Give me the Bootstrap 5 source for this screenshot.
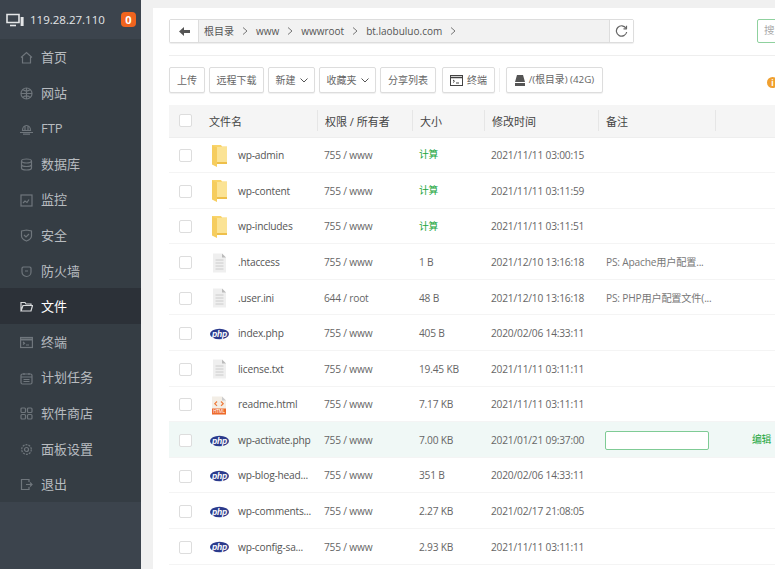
<!DOCTYPE html>
<html lang="zh">
<head>
<meta charset="utf-8">
<title>文件</title>
<link href="https://cdn.jsdelivr.net/npm/bootstrap@5.3.0/dist/css/bootstrap.min.css" rel="stylesheet">
<style>
html,body{height:100%;overflow:hidden}
body{font-family:"Open Sans","Noto Sans CJK SC",sans-serif;background:#f0f0f0;color:#555;font-size:11px}
.shell{width:775px;height:569px;overflow:hidden}
.side{width:141px;flex:none;background:#3c444d;color:#b8bcc0}
.side-top{height:39px;color:#e4e6e8;font-size:11.5px;padding:0 5px 0 6px}
.side-top svg{width:18px;height:14px;margin-right:6px}
.count{background:#f0641e;color:#fff;font-weight:700;font-size:11px;width:15px;height:15px;border-radius:4px;line-height:15px;text-align:center}
.menu{background:#353d44;padding:0;margin:0;list-style:none}
.menu li{height:35.6px;display:flex;align-items:center;padding:2px 0 0 20px;font-size:13px}
.menu li svg{width:13px;height:13px;margin-right:8px;flex:none;fill:none;stroke:#6f767c;stroke-width:1.2}
.menu li.on{background:#2c3138;color:#fff}
.menu li.on svg{stroke:#d8dadc}
.panel{background:#fff;margin:8px 0 0 12px;width:640px;flex:none;padding:11px 0 0 16px}
.pathbar{height:24px;width:465px;border:1px solid #ddd;border-radius:2px;background:#f2f2f2;font-size:10px;box-shadow:0 1px 1px #eee}
.backbtn,.refresh{width:29px;background:#fff;height:100%;flex:none}
.backbtn{border-right:1px solid #ddd}
.refresh{border-left:1px solid #ddd;width:24px;margin-left:auto}
.crumb{padding-left:5px;color:#555;gap:8px}
.searchbox{position:absolute;left:588px;top:0;width:60px;height:24px;border:1px solid #8fd19e;border-radius:2px;color:#aaa;padding:3px 0 0 6px;background:#fff;font-size:10.5px}
.toprow{position:relative}
.rule{height:1px;background:#eee;margin:12px 0 11px;width:606px}
.tools{gap:4px;height:26px;margin-bottom:12px;position:relative}
.tbtn{height:26px;border:1px solid #ddd;border-radius:2px;background:#fff;color:#666;font-size:10px;padding:0;box-shadow:0 1px 1px #f0f0f0;flex:none;display:flex;align-items:center;justify-content:center}
.w1{width:36px}.w2{width:55px}.w3{width:47px}.w4{width:57px}.w5{width:56px}.w6{width:53px;margin-left:2px}.w7{width:97px;font-size:9.8px}
.tsep{width:1px;height:24px;background:#eee;margin-right:2px}
.infodot{position:absolute;left:598px;top:10px;width:11px;height:11px;border-radius:50%;background:#f0a030;color:#fff;font-size:8px;font-weight:700;line-height:11px;text-align:center}
.ftable{table-layout:fixed;width:606px;margin:0;border-collapse:collapse;--bs-table-bg:transparent;color:#666;font-size:10.2px;letter-spacing:-.2px}
.ftable th,.ftable td{padding:0;vertical-align:middle;white-space:nowrap;overflow:hidden;border-bottom:1px solid #f4f4f4;box-shadow:none}
.ftable thead th{background:#f5f5f5;height:32px;font-weight:400;color:#444;font-size:11px;letter-spacing:0;border-bottom:1px solid #eee}
.ftable tbody td{height:35.6px;padding-top:2px}
.hcell{display:block;border-left:1px solid #e6e6e6;height:21px;line-height:24px;padding-left:7px}
.headname{padding-top:3px}
.ftable td.pad{padding-left:7px}
.ftable td.ps{padding-left:8px;color:#777}
.tick{display:block;width:13px;height:13px;flex:none;border:1px solid #ddd;border-radius:2px;background:#fff;margin:0 17px 0 10px}
.namecell{display:flex;align-items:center}
.ficon{width:20px;height:22px;margin-right:9px;flex:none}
.fname{color:#555}
.ftable td.calc{color:#20a53a;font-size:9.8px}
.rowhi td{background:#f0f8f6}
.noteinput{display:block;width:104px;height:19px;border:1px solid #7fcb95;border-radius:2px;background:#fff;margin-left:7px}
.ftable td.editlink{color:#20a53a;font-size:9.8px;padding-left:37px}
</style>
</head>
<body>
<svg width="0" height="0" class="position-absolute">
<defs>
<symbol id="folder" viewBox="0 0 20 22"><path d="M3 0h9l1 1.500h5V19H3z" fill="#f9d46a"/><path d="M8 2h10v15H8z" fill="#fbe395"/><path d="M3 .5l5 2V22l-5-2.500z" fill="#f6cd5e"/><path d="M8 17h10v2H8z" fill="#eebf4a"/></symbol>
<symbol id="doc" viewBox="0 0 20 22"><path d="M4 1.500h9l4 4v15H4z" fill="#efefef"/><path d="M13 1.500l4 4h-4z" fill="#bbb"/><path d="M6.500 8h8M6.500 11h8M6.500 14h8M6.500 17h8" stroke="#ccc"/></symbol>
<symbol id="php" viewBox="0 0 20 22"><ellipse cx="10.500" cy="11" rx="9.500" ry="5.300" fill="#2b3a8c"/><text x="10.500" y="13.800" text-anchor="middle" font-family="Liberation Sans,sans-serif" font-size="8.500" font-style="italic" font-weight="700" fill="#fff">php</text></symbol>
<symbol id="html" viewBox="0 0 20 22"><path d="M3 2.500h10l4 4v14H3z" fill="#f3eee6"/><path d="M13 2.500l4 4h-4z" fill="#ccc"/><path d="M8 7.500L5.800 9.700 8 11.900M12 7.500l2.200 2.200-2.200 2.200" fill="none" stroke="#ee7a3a" stroke-width="1.200"/><rect x="3" y="14.500" width="14" height="6" fill="#ee6a2c"/><text x="10" y="19.400" text-anchor="middle" font-family="Liberation Sans,sans-serif" font-size="4.500" fill="#fff">HTML</text></symbol>
<symbol id="chev" viewBox="0 0 6 8"><path d="M1 .5L5 4 1 7.500" fill="none" stroke="#777"/></symbol>
</defs>
</svg>
<div class="shell d-flex">
<aside class="side d-flex flex-column">
  <div class="side-top d-flex align-items-center">
    <svg viewBox="0 0 18 14"><path d="M1 1.500h12v8H1z" fill="none" stroke="#e4e6e8" stroke-width="1.600"/><path d="M4 12.500h6" stroke="#e4e6e8" stroke-width="1.600"/><rect x="14.600" y="4" width="3" height="9" fill="#e4e6e8"/></svg>
    <span>119.28.27.110</span><span class="count ms-auto">0</span>
  </div>
  <ul class="menu">
    <li><svg viewBox="0 0 13 13"><path d="M1 6.500L6.500 1.500 12 6.500M2.500 6v6h8V6"/></svg>首页</li>
    <li><svg viewBox="0 0 13 13"><circle cx="6.500" cy="6.500" r="5.500"/><path d="M1 6.500h11M6.500 1v11M3 2.800c2 1.400 5 1.400 7 0M3 10.200c2-1.400 5-1.400 7 0"/></svg>网站</li>
    <li><svg viewBox="0 0 13 13"><path d="M2.500 8.500a4 5 0 0 1 8 0zM0 10.500h13M5 3.500v5M8 3.500v5M3 12.200h7"/></svg>FTP</li>
    <li><svg viewBox="0 0 13 13"><ellipse cx="6.500" cy="3" rx="5" ry="2"/><path d="M1.500 3v7c0 1 2 2 5 2s5-1 5-2V3M1.500 6.500c0 1 2 2 5 2s5-1 5-2"/></svg>数据库</li>
    <li><svg viewBox="0 0 13 13"><rect x="1" y="1" width="11" height="11"/><path d="M3 9l2-2 2 1.500 2-3"/></svg>监控</li>
    <li><svg viewBox="0 0 13 13"><path d="M1.500 2l5-1 5 1v5c0 2.500-2.500 4-5 5-2.500-1-5-2.500-5-5z"/><path d="M4 6l2 2 3-3"/></svg>安全</li>
    <li><svg viewBox="0 0 13 13"><path d="M3 2h7l1 1v4a4.500 4.500 0 0 1-9 0V3zM5 6h3"/></svg>防火墙</li>
    <li class="on"><svg viewBox="0 0 13 13"><path d="M1 11V2.500h4l1 1.500h5v1.500M1 11l2-5.500h9.500L11 11z"/></svg>文件</li>
    <li><svg viewBox="0 0 13 13"><rect x="0.600" y="1.500" width="11.800" height="10"/><path d="M.6 3.500h11.800" stroke-width="2"/><path d="M3 6l1.500 1.200L3 8.500M6 9h3"/></svg>终端</li>
    <li><svg viewBox="0 0 13 13"><rect x="1" y="2" width="11" height="10" rx="1.500"/><path d="M1 5h11M4 1v2M9 1v2M3.500 7.500h6M3.500 9.500h6"/></svg>计划任务</li>
    <li><svg viewBox="0 0 13 13"><rect x="1" y="1" width="4.500" height="4.500" rx="1"/><rect x="7.500" y="1" width="4.500" height="4.500" rx="1"/><rect x="1" y="7.500" width="4.500" height="4.500" rx="1"/><rect x="7.500" y="7.500" width="4.500" height="4.500" rx="1"/></svg>软件商店</li>
    <li><svg viewBox="0 0 13 13"><circle cx="6.500" cy="6.500" r="2"/><circle cx="6.500" cy="6.500" r="4.800" stroke-dasharray="2 1"/></svg>面板设置</li>
    <li><svg viewBox="0 0 13 13"><path d="M9 4V1.500H1.500v10H9V9M6 6.500h6M10 4.500l2 2-2 2"/></svg>退出</li>
  </ul>
</aside>
<main class="panel">
  <div class="toprow">
    <div class="pathbar d-flex align-items-center">
      <div class="backbtn d-flex align-items-center justify-content-center"><svg width="11" height="9" viewBox="0 0 11 9"><path d="M0 4.500L5 0v3h6v3H5v3z" fill="#555"/></svg></div>
      <div class="crumb d-flex align-items-center"><span>根目录</span><svg width="6" height="8"><use href="#chev"/></svg><span>www</span><svg width="6" height="8"><use href="#chev"/></svg><span>wwwroot</span><svg width="6" height="8"><use href="#chev"/></svg><span>bt.laobuluo.com</span><svg width="6" height="8"><use href="#chev"/></svg></div>
      <div class="refresh d-flex align-items-center justify-content-center"><svg width="13" height="13" viewBox="0 0 13 13" fill="none" stroke="#666" stroke-width="1.200"><path d="M11 3.200A5.200 5.200 0 1 0 11.700 7"/><path d="M11.500 .8v3h-3" stroke-linejoin="round"/></svg></div>
    </div>
    <div class="searchbox">搜索</div>
  </div>
  <div class="rule"></div>
  <div class="tools d-flex align-items-center">
    <button type="button" class="tbtn w1">上传</button>
    <button type="button" class="tbtn w2">远程下载</button>
    <button type="button" class="tbtn w3">新建<svg class="ms-1" width="8" height="5" viewBox="0 0 8 5" fill="none" stroke="#555"><path d="M.5.5L4 4 7.500.5"/></svg></button>
    <button type="button" class="tbtn w4">收藏夹<svg class="ms-1" width="8" height="5" viewBox="0 0 8 5" fill="none" stroke="#555"><path d="M.5.5L4 4 7.500.5"/></svg></button>
    <button type="button" class="tbtn w5">分享列表</button>
    <button type="button" class="tbtn w6"><svg class="me-1" width="13" height="11" viewBox="0 0 13 11" fill="none" stroke="#444"><rect x=".5" y=".5" width="12" height="10"/><path d="M.5 2.500h12" stroke-width="1.500"/><path d="M3 5l1.500 1.200L3 7.500M6 8h3"/></svg>终端</button>
    <span class="tsep"></span>
    <button type="button" class="tbtn w7"><svg class="me-1" width="10" height="11" viewBox="0 0 10 11"><path d="M2 0h6l2 7H0z" fill="#555"/><rect y="8" width="10" height="3" fill="#555"/></svg>/(根目录) (42G)</button>
    <span class="infodot">i</span>
  </div>
  <table class="table ftable">
    <colgroup><col style="width:148px"><col style="width:95px"><col style="width:72px"><col style="width:114px"><col style="width:117px"><col style="width:60px"></colgroup>
    <thead><tr>
      <th><div class="namecell"><span class="tick"></span><span class="headname">文件名</span></div></th>
      <th><span class="hcell">权限 / 所有者</span></th><th><span class="hcell">大小</span></th><th><span class="hcell">修改时间</span></th><th><span class="hcell">备注</span></th><th><span class="hcell"></span></th>
    </tr></thead>
    <tbody>
      <tr><td><div class="namecell"><span class="tick"></span><svg class="ficon"><use href="#folder"/></svg><span class="fname">wp-admin</span></div></td><td class="pad">755 / www</td><td class="pad calc">计算</td><td class="pad">2021/11/11 03:00:15</td><td></td><td></td></tr>
      <tr><td><div class="namecell"><span class="tick"></span><svg class="ficon"><use href="#folder"/></svg><span class="fname">wp-content</span></div></td><td class="pad">755 / www</td><td class="pad calc">计算</td><td class="pad">2021/11/11 03:11:59</td><td></td><td></td></tr>
      <tr><td><div class="namecell"><span class="tick"></span><svg class="ficon"><use href="#folder"/></svg><span class="fname">wp-includes</span></div></td><td class="pad">755 / www</td><td class="pad calc">计算</td><td class="pad">2021/11/11 03:11:51</td><td></td><td></td></tr>
      <tr><td><div class="namecell"><span class="tick"></span><svg class="ficon"><use href="#doc"/></svg><span class="fname">.htaccess</span></div></td><td class="pad">755 / www</td><td class="pad">1 B</td><td class="pad">2021/12/10 13:16:18</td><td class="ps">PS: Apache用户配置...</td><td></td></tr>
      <tr><td><div class="namecell"><span class="tick"></span><svg class="ficon"><use href="#doc"/></svg><span class="fname">.user.ini</span></div></td><td class="pad">644 / root</td><td class="pad">48 B</td><td class="pad">2021/12/10 13:16:18</td><td class="ps">PS: PHP用户配置文件(...</td><td></td></tr>
      <tr><td><div class="namecell"><span class="tick"></span><svg class="ficon"><use href="#php"/></svg><span class="fname">index.php</span></div></td><td class="pad">755 / www</td><td class="pad">405 B</td><td class="pad">2020/02/06 14:33:11</td><td></td><td></td></tr>
      <tr><td><div class="namecell"><span class="tick"></span><svg class="ficon"><use href="#doc"/></svg><span class="fname">license.txt</span></div></td><td class="pad">755 / www</td><td class="pad">19.45 KB</td><td class="pad">2021/11/11 03:11:11</td><td></td><td></td></tr>
      <tr><td><div class="namecell"><span class="tick"></span><svg class="ficon"><use href="#html"/></svg><span class="fname">readme.html</span></div></td><td class="pad">755 / www</td><td class="pad">7.17 KB</td><td class="pad">2021/11/11 03:11:11</td><td></td><td></td></tr>
      <tr class="rowhi"><td><div class="namecell"><span class="tick"></span><svg class="ficon"><use href="#php"/></svg><span class="fname">wp-activate.php</span></div></td><td class="pad">755 / www</td><td class="pad">7.00 KB</td><td class="pad">2021/01/21 09:37:00</td><td><span class="noteinput"></span></td><td class="editlink">编辑</td></tr>
      <tr><td><div class="namecell"><span class="tick"></span><svg class="ficon"><use href="#php"/></svg><span class="fname">wp-blog-head...</span></div></td><td class="pad">755 / www</td><td class="pad">351 B</td><td class="pad">2020/02/06 14:33:11</td><td></td><td></td></tr>
      <tr><td><div class="namecell"><span class="tick"></span><svg class="ficon"><use href="#php"/></svg><span class="fname">wp-comments...</span></div></td><td class="pad">755 / www</td><td class="pad">2.27 KB</td><td class="pad">2021/02/17 21:08:05</td><td></td><td></td></tr>
      <tr><td><div class="namecell"><span class="tick"></span><svg class="ficon"><use href="#php"/></svg><span class="fname">wp-config-sa...</span></div></td><td class="pad">755 / www</td><td class="pad">2.93 KB</td><td class="pad">2021/11/11 03:11:11</td><td></td><td></td></tr>
    </tbody>
  </table>
</main>
</div>
</body>
</html>
